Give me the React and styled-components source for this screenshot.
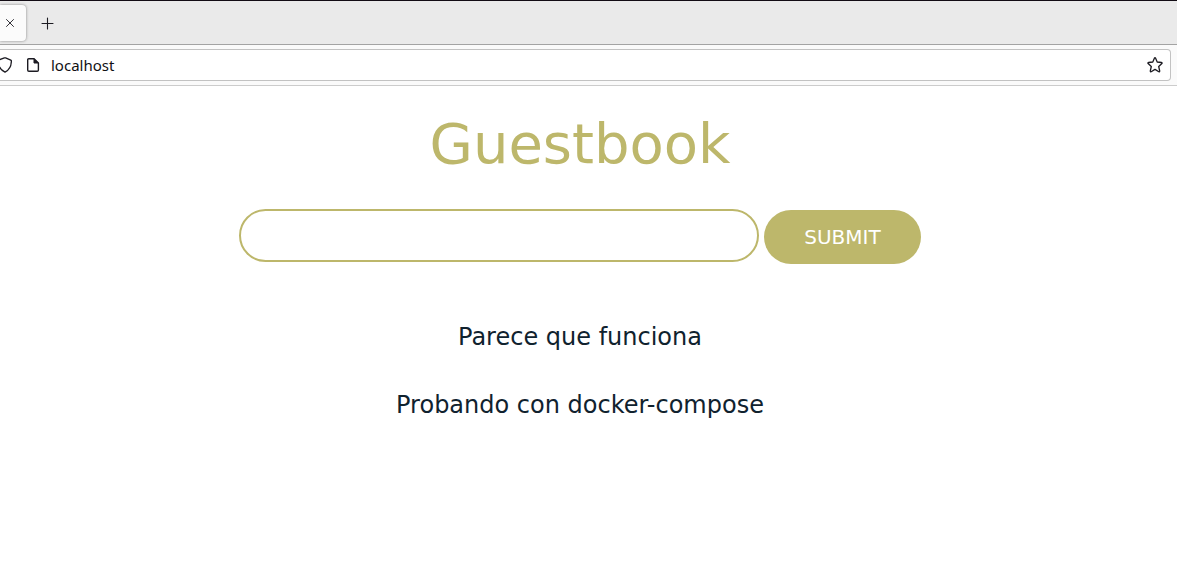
import React, { useState } from "react";
import styled, { createGlobalStyle } from "styled-components";

const GlobalStyle = createGlobalStyle`
  *, *::before, *::after { box-sizing: border-box; }
  body {
    margin: 0;
    background: #ffffff;
    font-family: "DejaVu Sans", sans-serif;
  }
`;

const TabStrip = styled.div`
  display: flex;
  align-items: center;
  height: 45px;
  border-top: 1px solid #120c14;
  border-bottom: 1px solid #a3a3a3;
  background: #eaeaea;
`;

const Tab = styled.div`
  display: flex;
  align-items: center;
  justify-content: flex-end;
  width: 26px;
  height: 36px;
  padding-right: 6px;
  border-radius: 0 4px 4px 0;
  background: #fbfbfb;
  box-shadow: 0 0 3px rgba(0, 0, 0, 0.45);
`;

const IconButton = styled.button`
  display: flex;
  flex: none;
  align-items: center;
  justify-content: center;
  width: ${({ $size }) => $size}px;
  height: ${({ $size }) => $size}px;
  padding: 0;
  border: 0;
  background: none;
  color: #1c1b22;
`;

const NewTab = styled(IconButton)`
  margin-left: 13px;
`;

const NavBar = styled.div`
  height: 41px;
  padding: 4px 6px 4px 0;
  border-bottom: 1px solid #cccccc;
  background: #fafafa;
`;

const AddressBar = styled.div`
  display: flex;
  align-items: center;
  height: 32px;
  padding-right: 7px;
  border: 1px solid #c2c2c2;
  border-left: 0;
  border-radius: 0 4px 4px 0;
  background: #ffffff;
  color: #1c1b22;
`;

const SiteIcons = styled.div`
  display: flex;
  flex: none;
  gap: 12px;
  width: 51px;
`;

const AddressInput = styled.input`
  flex: 1;
  min-width: 0;
  height: 24px;
  padding: 0;
  border: 0;
  outline: 0;
  background: none;
  color: #101014;
  font: 15px/24px "Noto Sans", sans-serif;
`;

const Page = styled.main`
  display: flex;
  flex-direction: column;
  align-items: center;
  padding: 24px 17px 24px 0;
`;

const Title = styled.h1`
  margin: 0;
  color: #bdb76b;
  font-size: 56px;
  font-weight: 400;
  line-height: 68px;
`;

const EntryForm = styled.form`
  display: flex;
  align-items: flex-start;
  justify-content: center;
  gap: 5px;
  width: 100%;
  margin-top: 31px;
`;

const EntryInput = styled.input`
  flex: 0 1 520px;
  min-width: 0;
  height: 53px;
  padding: 0 24px;
  border: 2px solid #bdb76b;
  border-radius: 27px;
  outline: 0;
  background: #ffffff;
  color: #10222e;
  font: 20px "DejaVu Sans", sans-serif;
`;

const SubmitButton = styled.button`
  flex: none;
  height: 54px;
  margin-top: 1px;
  padding: 0 40px;
  border: 0;
  border-radius: 27px;
  background: #bdb76b;
  color: #ffffff;
  font: 20px "DejaVu Sans", sans-serif;
`;

const Entries = styled.div`
  display: flex;
  flex-direction: column;
  gap: 40px;
  margin-top: 59px;
  text-align: center;
`;

const Entry = styled.p`
  margin: 0;
  color: #10222e;
  font-size: 24px;
  line-height: 28px;
`;

const Icon = ({ size = 16, width = 1.4, children }) => (
  <svg
    width={size}
    height={size}
    viewBox={`0 0 ${size} ${size}`}
    fill="none"
    stroke="currentColor"
    strokeWidth={width}
    strokeLinecap="round"
    strokeLinejoin="round"
    aria-hidden="true"
  >
    {children}
  </svg>
);

const ShieldIcon = () => (
  <svg width="12" height="16" viewBox="0 0 12 16" fill="none" stroke="currentColor" strokeWidth="1.3" strokeLinejoin="round" aria-hidden="true">
    <path d="M-1.8 3.2 4.4 .9Q5 .7 5.6 .9L10.8 3.1Q11.4 3.4 11.4 4C11.3 8.8 9.4 13 5 15.2C.4 13-1.7 8.8-1.8 4Z" />
  </svg>
);

const entries = ["Parece que funciona", "Probando con docker-compose"];

export default function App() {
  const [address, setAddress] = useState("localhost");
  const [text, setText] = useState("");

  return (
    <>
      <GlobalStyle />
      <header>
        <TabStrip>
          <Tab>
            <IconButton $size={20} type="button" aria-label="Close tab">
              <Icon size={10} width={0.9}>
                <path d="M1.5 1.5 8.5 8.5M8.5 1.5 1.5 8.5" />
              </Icon>
            </IconButton>
          </Tab>
          <NewTab $size={16} type="button" aria-label="New tab">
            <Icon width={1.1}>
              <path d="M8.5 3V14M3 8.5H14" />
            </Icon>
          </NewTab>
        </TabStrip>
        <NavBar>
          <AddressBar>
            <SiteIcons>
              <ShieldIcon />
              <Icon>
                <path d="M4.7 1.7H10L14.4 6V13.1Q14.4 14.3 13.2 14.3H4.9Q3.7 14.3 3.7 13.1V2.7Q3.7 1.7 4.7 1.7Z" />
                <path d="M10 2.2V6H13.9Z" fill="currentColor" strokeWidth="1" />
              </Icon>
            </SiteIcons>
            <AddressInput
              aria-label="Address"
              value={address}
              onChange={(e) => setAddress(e.target.value)}
            />
            <IconButton $size={16} type="button" aria-label="Bookmark this page">
              <Icon width={1.3}>
                <path d="M7.4 1.2Q8 .3 8.6 1.2L10.2 5L14.6 5.5Q15.5 5.8 14.9 6.6L11.7 9.5L12.7 14Q12.7 15 11.8 14.7L8 12.4L4.2 14.7Q3.3 15 3.3 14L4.3 9.5L1.1 6.6Q.5 5.8 1.4 5.5L5.8 5Z" />
              </Icon>
            </IconButton>
          </AddressBar>
        </NavBar>
      </header>
      <Page>
        <Title>Guestbook</Title>
        <EntryForm onSubmit={(e) => e.preventDefault()}>
          <EntryInput
            aria-label="Guestbook entry"
            value={text}
            onChange={(e) => setText(e.target.value)}
          />
          <SubmitButton type="submit">SUBMIT</SubmitButton>
        </EntryForm>
        <Entries>
          {entries.map((entry) => (
            <Entry key={entry}>{entry}</Entry>
          ))}
        </Entries>
      </Page>
    </>
  );
}
